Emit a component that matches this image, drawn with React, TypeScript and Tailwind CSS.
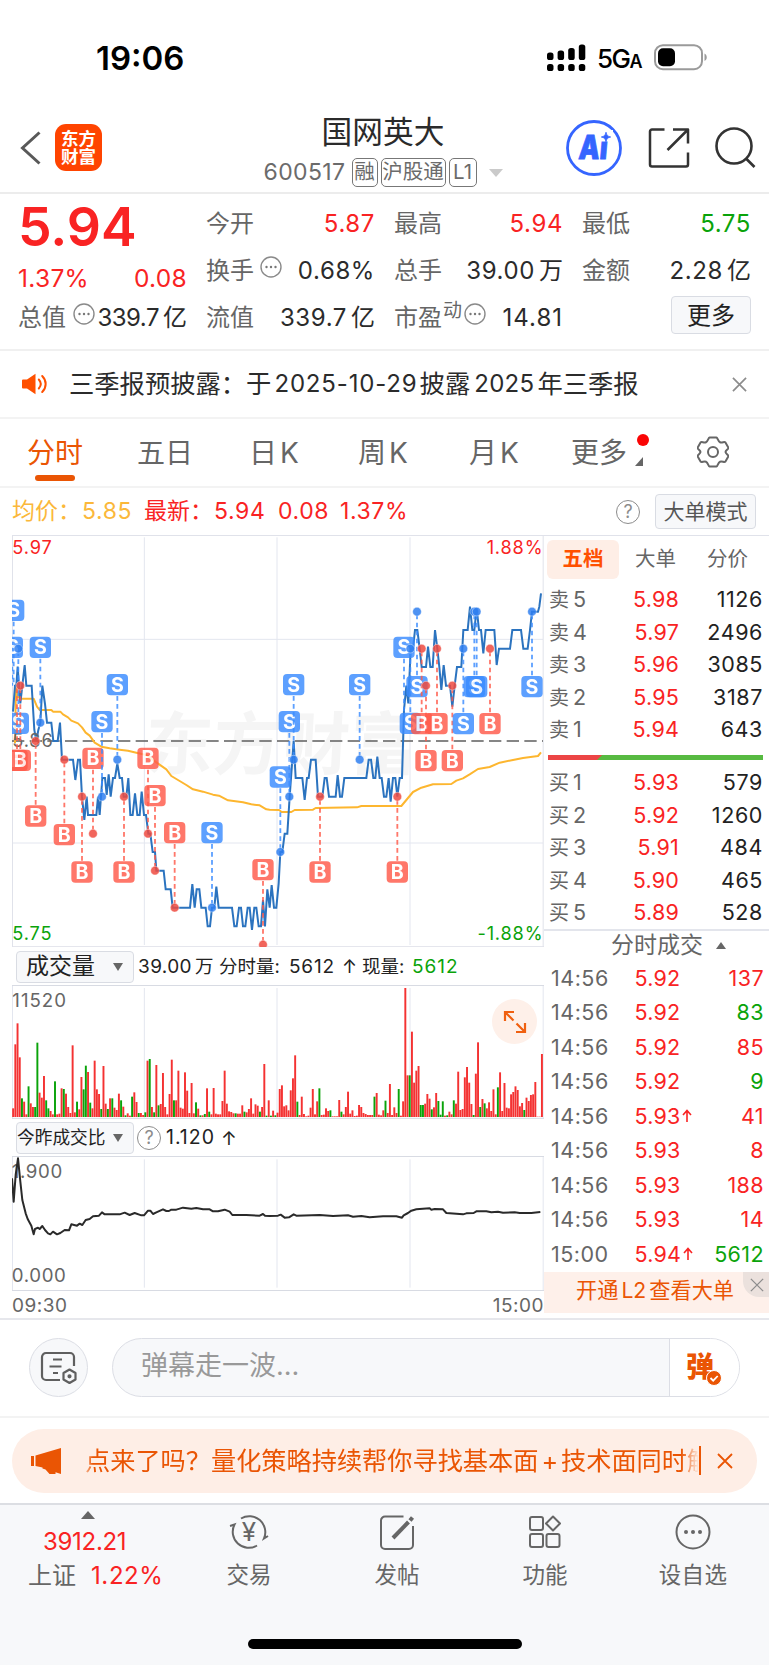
import React from "react";

type Pt = [number, number];

/* Chart data is stored at three units per CSS pixel. */
const shift = (pts: Pt[]): Pt[] => pts.map(([x, y]) => [x + 810, y]);
const toPoints = (pts: Pt[]) => pts.map((p) => p.join(",")).join(" ");

const price: Pt[] = [
  [40, 545], [46, 467], [50, 467], [54, 410], [58, 467], [62, 520], [68, 467], [75, 405], [80, 467], [96, 467], [104, 600], [110, 633], [116, 600], [122, 578],
  [128, 467], [136, 522], [142, 578], [155, 578], [161, 633], [174, 633], [181, 578], [187, 689], [220, 689], [227, 750], [235, 689], [241, 689], [247, 800],
  [254, 870], [261, 800], [265, 855], [290, 855], [295, 800], [300, 855], [308, 744], [316, 744], [321, 795], [327, 733], [333, 800], [340, 744], [346, 744],
  [353, 700], [360, 744], [367, 744], [372, 800], [380, 800], [386, 744], [392, 855], [399, 855], [406, 790], [413, 855], [420, 855], [426, 785], [433, 855],
  [439, 855], [446, 911], [452, 911], [459, 966], [466, 966], [470, 1022], [492, 1022], [498, 1078], [513, 1078], [519, 1133], [571, 1133], [578, 1062],
  [585, 1133], [591, 1078], [599, 1078], [605, 1133], [618, 1133], [624, 1189], [631, 1189], [637, 1133], [644, 1133], [650, 1070], [657, 1133], [697, 1133],
  [704, 1189], [711, 1189], [718, 1133], [724, 1133], [730, 1189], [737, 1189], [744, 1133], [750, 1133], [757, 1200], [764, 1133], [770, 1133], [777, 1189],
  [784, 1189], [790, 1110], [796, 1189], [803, 1078], [810, 1133], [816, 1065], [823, 1133], [830, 1133],
  ...shift([
    [27, 1060], [32, 966], [38, 966], [45, 911], [53, 911], [60, 800], [72, 633], [78, 744], [98, 744], [105, 810], [112, 744], [117, 744], [124, 689], [138, 689],
    [145, 800], [158, 800], [165, 744], [171, 744], [178, 800], [198, 800], [204, 735], [211, 800], [217, 800], [224, 744], [290, 744], [297, 689], [304, 689],
    [311, 744], [317, 744], [323, 680], [330, 744], [336, 744], [343, 800], [350, 800], [357, 744], [363, 815], [370, 744], [377, 744], [383, 800], [390, 744],
    [397, 744], [403, 540], [410, 467], [416, 520], [423, 356], [430, 356], [436, 300], [443, 300], [450, 356], [456, 411], [469, 411], [475, 350], [482, 411],
    [489, 411], [496, 300], [503, 356], [509, 411], [515, 480], [522, 405], [529, 467], [541, 467], [548, 530], [555, 467], [562, 411], [575, 411], [581, 300],
    [594, 300], [601, 230], [608, 300], [614, 300], [621, 235], [628, 300], [634, 300], [641, 370], [648, 300], [674, 300], [681, 405], [688, 356], [721, 356],
    [728, 300], [754, 300], [761, 356], [774, 356], [781, 300], [787, 245], [805, 245], [809, 230], [814, 190],
  ]),
];

const average: Pt[] = [
  [46, 640], [49, 465], [54, 500], [62, 506], [102, 506], [112, 530], [120, 540], [155, 540], [160, 545], [182, 545], [190, 553], [205, 562], [215, 572],
  [235, 580], [247, 592], [258, 608], [270, 617], [285, 638], [305, 650], [330, 655], [360, 659], [385, 662], [410, 668], [440, 675], [470, 697], [500, 718],
  [515, 738], [535, 750], [560, 765], [580, 778], [610, 785], [640, 794], [658, 797], [685, 811], [730, 817], [755, 823], [780, 826], [800, 838],
  ...shift([
    [0, 839], [28, 840], [36, 846], [65, 846], [75, 840], [130, 839], [138, 834], [262, 832], [275, 828], [395, 828], [410, 810], [430, 786], [455, 773],
    [490, 763], [545, 762], [560, 752], [580, 745], [600, 733], [625, 717], [660, 711], [690, 698], [730, 690], [760, 684], [805, 678], [814, 667],
  ]),
];

const ratio: Pt[] = [
  [37, 700], [42, 770], [48, 690], [55, 640], [62, 710], [68, 765], [78, 805], [84, 822], [95, 842], [102, 868], [106, 852], [115, 848], [120, 852], [128, 843],
  [136, 855], [145, 865], [152, 868], [160, 860], [172, 868], [182, 864], [195, 855], [208, 856], [215, 838], [232, 842], [240, 836], [248, 840], [258, 825],
  [270, 822], [280, 814], [298, 812], [307, 802], [315, 808], [360, 808], [375, 803], [390, 810], [405, 804], [425, 811], [433, 811], [445, 797], [452, 797],
  [460, 807], [470, 802], [490, 793], [500, 798], [508, 798], [515, 794], [530, 794], [550, 788], [575, 791], [590, 789], [610, 793], [630, 793], [640, 799],
  [655, 799], [675, 794], [690, 800], [698, 810], [740, 810], [780, 812], [790, 807], [796, 812],
  ...shift([
    [0, 813], [25, 812], [33, 809], [45, 818], [58, 817], [72, 808], [80, 812], [150, 810], [190, 813], [235, 811], [250, 815], [275, 813], [300, 817],
    [340, 814], [380, 814], [397, 818], [402, 811], [415, 804], [425, 797], [440, 793], [480, 790], [485, 794], [495, 792], [520, 793], [530, 804],
    [560, 806], [580, 808], [590, 805], [612, 804], [620, 799], [650, 799], [665, 802], [685, 800], [700, 803], [735, 802], [750, 804], [785, 804], [812, 801],
  ]),
];

type Marker = [kind: "S" | "B", x: number, boxY: number, dotY: number];
const markers: Marker[] = [
  ["S", 42, 241, 467], ["S", 38, 352, 467], ["S", 122, 352, 578], ["S", 56, 580, 356], ["B", 52, 691, 467], ["B", 62, 691, 467],
  ["B", 108, 858, 633], ["B", 194, 914, 689], ["B", 247, 1026, 800], ["B", 280, 685, 911], ["S", 307, 575, 800], ["S", 353, 464, 689],
  ["B", 373, 1026, 800], ["B", 445, 685, 911], ["B", 466, 797, 1022], ["B", 525, 908, 1133], ["S", 637, 908, 1133], ["B", 790, 1019, 1244],
  ["S", 842, 741, 966], ["S", 869, 575, 800], ["S", 882, 464, 689], ["S", 1080, 464, 689], ["B", 961, 1026, 800], ["B", 1193, 1026, 800],
  ["S", 1213, 352, 578], ["S", 1232, 580, 356], ["S", 1252, 470, 245], ["B", 1266, 581, 356], ["B", 1279, 692, 467], ["B", 1312, 581, 356],
  ["B", 1358, 692, 467], ["S", 1391, 581, 356], ["S", 1424, 470, 245], ["S", 1431, 470, 245], ["B", 1471, 581, 356], ["S", 1597, 470, 245],
];
const hiddenDots = new Set(["42-467", "38-467", "52-467", "1213-578"]);

/* Top edge of each minute's volume bar; green ones carry a "g". */
const volume =
  "490 298 235 337 460g 470 508 424g 475 486 486g 293g 443 458 393 466g 490g 498 508 409g 508 506 430 432g 446 486 504 301 502 470g 493 396 433g 362g 381 473g 490 347 433 447 492g 363 476 492g 460 460g 488 495 446 466g 485 511g 505 512 455g 442 471 504g 504 510 502g 347 342g 486 502g 360 481g 477 384 486 508 447 344 466g 466 377 488 491 382 437 504 414 505 472g 491 511g 511 507g 430 500g 508 429 506 508 508 468 377 476 499 501 505 505g 506 506 481 500g 502 492 460 506 478 482 500g 486 357 512g 466 512g 497 511g 503 432 421 484 481 496 436 400 331 470g 510 455 507 514 512 488 432 508 469 430g 510 509 490 498 496g 514 514 514 465 500g 508 486 440 506 496 513 512 480 486 504 507 510 510 510 455g 444 509 511 496 467g 504 417 510 487 504 432g 512 469 129 391 391g 260 413 377 363 480g 480g 476 447 461 493g 487 444 468g 509g 469g 512 511g 500 508 466g 476 380 495 492 397 366 413 477 510g 386 292 486g 462 475g 490 472 498 433 508 427g 382 498 414 488 490 448 441 424 435 484 474 495g 458 468 450 448 411 515 515 327"
    .split(" ")
    .map((s) => ({ top: parseInt(s, 10), green: s.endsWith("g") }));

const font = "[font-family:Inter,'Noto_Sans_CJK_SC',sans-serif]";

function Dots({ className = "" }: { className?: string }) {
  return (
    <svg viewBox="0 0 22 22" className={`size-[22px] shrink-0 ${className}`} fill="none" stroke="#8a8a8a" strokeWidth="1.4">
      <circle cx="11" cy="11" r="10" />
      {[6.5, 11, 15.5].map((x) => (
        <circle key={x} cx={x} cy="11" r="1.2" fill="#777" stroke="none" />
      ))}
    </svg>
  );
}

function Question({ className = "" }: { className?: string }) {
  return (
    <span className={`flex size-6 shrink-0 items-center justify-center rounded-full border-[1.5px] border-[#8c8c8c] text-[18px] leading-none text-[#8c8c8c] ${className}`}>?</span>
  );
}

function Close({ className = "", color = "#8c8c8c", width = 1.8 }: { className?: string; color?: string; width?: number }) {
  return (
    <svg viewBox="0 0 16 16" className={className} stroke={color} strokeWidth={width}>
      <path d="M1 1l14 14M15 1L1 15" />
    </svg>
  );
}

function StatusBar() {
  return (
    <div className="flex h-[110px] items-center pl-[96px] text-black">
      <div className="w-[451px] pt-[7px] text-[33px] font-semibold tracking-[0px]">19:06</div>
      <svg viewBox="0 0 40 28" className="mt-[5px] h-7 w-10">
        {[0, 10.6, 21.2, 31.8].map((x, i) => (
          <g key={x}>
            <rect x={x} y={[8.5, 6.5, 4, 0.5][i]} width="6.5" height={[7.5, 9.5, 12, 15.5][i]} rx="2.6" />
            <rect x={x} y="20" width="6.5" height="7" rx="2.6" />
          </g>
        ))}
      </svg>
      <div className="ml-[10px] w-[57px] whitespace-nowrap pt-[7px] text-[26px] font-medium leading-none tracking-[-1.5px]">
        5G<span className="text-[18px] font-semibold">A</span>
      </div>
      <svg viewBox="0 0 54 27" className="mt-[4px] h-[27px] w-[54px]">
        <rect x="1" y="1.200" width="47" height="24" rx="8" fill="none" stroke="#9a9a9a" strokeWidth="2" />
        <rect x="4" y="4.200" width="17" height="18" rx="5" />
        <path d="M50.500 9.500c3 1.400 3 6.200 0 7.500z" fill="#9a9a9a" />
      </svg>
    </div>
  );
}

function Header() {
  const tag = "flex h-[29px] items-center justify-center rounded-[5px] border-[1.5px] border-[#777] text-[20.5px] leading-none";
  return (
    <div className="flex h-[84px] items-start border-b-2 border-[#ececec] pl-5">
      <svg viewBox="0 0 21 34" className="mt-[21px] h-[34px] w-[21px]" fill="none" stroke="#595959" strokeWidth="3">
        <path d="M19.500 1.500L2.500 17l17 15.500" />
      </svg>
      <div className="ml-[14px] mt-[14px] flex h-[47px] w-[47px] flex-col items-center justify-center rounded-[11px] bg-[#ff4400] text-[17.500px] font-bold leading-[18px] text-white">
        <span>东方</span>
        <span>财富</span>
      </div>
      <div className="flex w-[463px] flex-col items-center pl-[99px]">
        <div className="mt-[4px] text-[30.700px] leading-[36px] text-[#2b2b2b]">国网英大</div>
        <div className="mt-[8px] flex items-center text-[#6b6b6b]">
          <span className="mr-[6px] text-[23px] leading-none tracking-[0.4px]">600517</span>
          <span className={`${tag} w-[26px]`}>融</span>
          <span className={`${tag} ml-[3px] w-[65px]`}>沪股通</span>
          <span className={`${tag} ml-[3px] w-[28px]`}>L1</span>
          <svg viewBox="0 0 14 8" className="ml-[12px] h-2 w-3.5" fill="#cacaca"><path d="M0 0h14L7 8z" /></svg>
        </div>
      </div>
      <div className="flex items-center pt-[9px]">
        <svg viewBox="0 0 58 58" className="h-[58px] w-[58px]" fill="#3565ff">
          <circle cx="29" cy="29" r="26.500" fill="#fff" stroke="#3565ff" strokeWidth="2.800" />
          <text transform="translate(13 39.500) skewX(-5) scale(.8 1)" fontSize="33" fontWeight="900" stroke="#3565ff" strokeWidth="0.800" fontFamily="Inter, sans-serif">Ai</text>
          <rect x="34" y="11" width="14" height="11.500" fill="#fff" />
          <path d="M41 13.200c.7 3 1.500 4 4.700 4.800-3.200.8-4 1.800-4.700 4.800-.7-3-1.500-4-4.700-4.800 3.200-.8 4-1.800 4.700-4.800z" stroke="#3565ff" strokeWidth="0.800" />
        </svg>
        <svg viewBox="0 0 42 42" className="ml-[25px] h-[42px] w-[42px]" fill="none" stroke="#333" strokeWidth="2.500" strokeLinejoin="round">
          <path d="M16.500 2.500H4a2 2 0 0 0-2 2v33a2 2 0 0 0 2 2h34a2 2 0 0 0 2-2V25.500M25 2.500h15V16.500M40 2.500L19.500 23" />
        </svg>
        <svg viewBox="0 0 44 44" className="ml-[24px] h-[44px] w-[44px]" fill="none" stroke="#333" strokeWidth="2.600">
          <circle cx="20" cy="20" r="17.500" />
          <path d="M32 32.500l8.500 8.500" />
        </svg>
      </div>
    </div>
  );
}

function Stat({ label, children, tone = "text-[#2b2b2b]", extra }: { label: string; children?: React.ReactNode; tone?: string; extra?: React.ReactNode }) {
  return (
    <div className="flex h-[47px] items-center whitespace-nowrap leading-none">
      <span className="text-[24px] text-[#666]">{label}</span>
      {extra}
      <span className={`ml-auto text-[24px] tracking-[0.6px] ${tone}`}>{children}</span>
    </div>
  );
}

const Unit = ({ children }: { children: string }) => <span className="ml-[4px] text-[24px] tracking-normal">{children}</span>;

function Quote() {
  return (
    <section className="flex h-[157px] gap-[19px] border-b-2 border-[#f0f0f0] pl-[18px] pt-[6px]">
      <div className="flex w-[169px] flex-col">
        <div className="flex h-[54px] items-center text-[53.500px] font-semibold leading-none text-[#f92323]">5.94</div>
        <div className="flex h-[46px] items-center justify-between pt-[3px] text-[24.500px] tracking-[0.3px] text-[#f92323]">
          <span>1.37%</span><span>0.08</span>
        </div>
        <div className="-mt-[6px]">
          <Stat label="总值" extra={<Dots className="-mt-2 ml-[7px]" />}>
            <span className="tracking-[-0.5px]">339.7</span><Unit>亿</Unit>
          </Stat>
        </div>
      </div>
      <div className="w-[169px]">
        <Stat label="今开" tone="text-[#f92323]">5.87</Stat>
        <Stat label="换手" extra={<Dots className="-mt-2 ml-[6px]" />}>0.68%</Stat>
        <Stat label="流值">339.7<Unit>亿</Unit></Stat>
      </div>
      <div className="w-[169px]">
        <Stat label="最高" tone="text-[#f92323]">5.94</Stat>
        <Stat label="总手">39.00<Unit>万</Unit></Stat>
        <Stat label="市盈" extra={<><span className="-mt-[14px] ml-[1px] text-[19px] text-[#666]">动</span><Dots className="-mt-2 ml-[2px]" /></>}><span className="tracking-[1px]">14.81</span></Stat>
      </div>
      <div className="flex w-[169px] flex-col">
        <Stat label="最低" tone="text-[#0aa30a]">5.75</Stat>
        <Stat label="金额">2.28<Unit>亿</Unit></Stat>
        <button className="ml-auto mt-[2px] flex h-[38px] w-[80px] items-center justify-center rounded-[4px] border border-[#d9dce3] bg-[#f7f8fa] pt-px text-[24px] leading-none text-[#222]">更多</button>
      </div>
    </section>
  );
}

function Notice() {
  return (
    <section className="flex h-[68px] items-center border-b-2 border-[#f3f3f3] pl-[22px]">
      <svg viewBox="0 0 26 22" className="h-[22px] w-[26px]" fill="#ff5000">
        <path d="M1 6.500h4L13.500.8v20.400L5 15.500H1a1 1 0 0 1-1-1v-7a1 1 0 0 1 1-1z" />
        <path d="M16.800 6.500c2.400 2.700 2.400 6.300 0 9M20.200 3c4.600 4.500 4.600 11.500 0 16" fill="none" stroke="#ff5000" strokeWidth="2" strokeLinecap="round" />
      </svg>
      <div className="ml-[21px] flex w-[663px] items-center whitespace-nowrap text-[25.300px] leading-none text-[#2b2b2b]">
        三季报预披露：于<span className="ml-[3px] mr-[2px] text-[24px] tracking-[0.85px]">2025-10-29</span>披露<span className="ml-[4px] mr-[3px] text-[24px] tracking-[0.3px]">2025</span>年三季报
      </div>
      <Close className="size-[15px]" />
    </section>
  );
}

function Tabs() {
  const K = () => <span className="ml-[3px]">K</span>;
  const tab = "flex items-center whitespace-nowrap";
  return (
    <nav className="flex h-[69px] items-stretch border-b-2 border-[#f3f3f3] pl-[27px] text-[28px] leading-none text-[#666]">
      <div className={`${tab} relative w-[110px] text-[#ea5504]`}>
        分时
        <span className="absolute bottom-[5px] left-[8px] h-[6px] w-[40px] rounded-full bg-[#ea5504]" />
      </div>
      <div className={`${tab} w-[112px]`}>五日</div>
      <div className={`${tab} w-[109px]`}>日<K /></div>
      <div className={`${tab} w-[111px]`}>周<K /></div>
      <div className={`${tab} w-[102px]`}>月<K /></div>
      <div className={`${tab} relative w-[126px]`}>
        更多
        <span className="absolute left-[66px] top-[15px] size-[12px] rounded-full bg-[#fa0505]" />
        <svg viewBox="0 0 8 9" className="absolute left-[64px] top-[38px] h-[9px] w-2" fill="#666"><path d="M8 0v9H0z" /></svg>
      </div>
      <svg viewBox="0 0 32 32" className="mt-[17px] size-8" fill="none" stroke="#666" strokeWidth="2" strokeLinejoin="round">
        <path d="M12.500 1.500h7c1 0 1.500 4 3.500 4.800s4.500-1 5.300 0l3 5.200c.6 1.500-2.800 2.800-2.800 4.500s3.400 3 2.800 4.500l-3 5.200c-.8 1-3.300-.8-5.300 0s-2.500 4.800-3.500 4.800h-7c-1 0-1.500-4-3.500-4.800s-4.500 1-5.300 0l-3-5.200C.1 19 3.500 17.700 3.500 16S.1 13 .7 11.500l3-5.200c.8-1 3.300.8 5.300 0s2.500-4.800 3.500-4.800z" />
        <circle cx="16" cy="16" r="5" />
      </svg>
    </nav>
  );
}

function InfoLine() {
  return (
    <div className="flex h-[47px] items-center whitespace-nowrap pl-[12px] text-[23px] leading-none text-[#f92323]">
      <span className="w-[70px] text-[#fbb83a]">均价：</span>
      <span className="w-[62px] tracking-[0.6px] text-[#fbb83a]">5.85</span>
      <span className="w-[70px]">最新：</span>
      <span className="w-[64px] tracking-[0.6px]">5.94</span>
      <span className="w-[62px] tracking-[0.6px]">0.08</span>
      <span className="w-[276px] tracking-[0.6px]">1.37%</span>
      <Question />
      <button className="ml-[15px] flex h-[35px] w-[101px] items-center justify-center rounded-[4px] border border-[#d9dce3] bg-[#f7f8fa] text-[21px] leading-none text-[#555]">大单模式</button>
    </div>
  );
}

function PriceChart() {
  return (
    <svg viewBox="37 15 1596 1236" className="block h-[412px] w-[532px] overflow-hidden" fontFamily="Inter, 'Noto Sans CJK SC', sans-serif">
      <text x="440" y="718" fontSize="205" fontWeight="700" fill="#f5f5f5" transform="skewX(-3) translate(30 0)">东方财富</text>
      <g stroke="#e3e6ef" strokeWidth="3" fill="none">
        <path d="M434 22V1245M832 22V1245M1231 22V1245M37 328H1630M37 939H1630" />
        <path d="M38.500 16V1252M1630.500 16V1252M37 16.500H1633M37 1250H1633" stroke="#e0e2ea" />
      </g>
      <path d="M37 633H1630" stroke="#5f5f5f" strokeWidth="4" strokeDasharray="37 16" fill="none" />
      <polyline points={toPoints(average)} fill="none" stroke="#fdb62f" strokeWidth="6" strokeLinejoin="round" />
      <polyline points={toPoints(price)} fill="none" stroke="#2b73bf" strokeWidth="6" strokeLinejoin="miter" />
      <g fontSize="54.500" letterSpacing="2.500">
        <text x="38" y="72" fill="#f92323">5.97</text>
        <text x="38" y="1229" fill="#0aa30a">5.75</text>
        <text x="38" y="652" fill="#666">5.86</text>
        <text x="1631" y="73" fill="#f92323" textAnchor="end">1.88%</text>
        <text x="1631" y="1229" fill="#0aa30a" textAnchor="end">-1.88%</text>
      </g>
      {markers.map(([kind, x, boxY, dotY], i) => {
        const color = kind === "S" ? "#3a8cff" : "#ff5a4a";
        const edge = boxY < dotY ? boxY + 34 : boxY - 34;
        return (
          <g key={i} opacity="0.82">
            <path d={`M${x} ${edge}V${dotY}`} stroke={color} strokeWidth="5.500" strokeDasharray="14 10" />
            <rect x={x - 32} y={boxY - 32} width="64" height="64" rx="12" fill={color} />
            <text x={x} y={boxY + 21} fontSize="59" fontWeight="700" fill="#fff" textAnchor="middle">{kind}</text>
          </g>
        );
      })}
      {markers.map(([kind, x, , dotY], i) =>
        hiddenDots.has(`${x}-${dotY}`) ? null : (
          <circle key={i} cx={x} cy={dotY} r="13" fill={kind === "S" ? "#2f7ff0" : "#ef4a40"} fillOpacity="0.85" stroke="#fff" strokeWidth="2" strokeOpacity="0.6" />
        ),
      )}
    </svg>
  );
}

function Picker({ children, className }: { children: string; className: string }) {
  return (
    <div className={`flex h-[32px] w-[118px] shrink-0 items-center rounded-[4px] border border-[#d9dce3] bg-[#f7f8fa] leading-none text-[#222] ${className}`}>
      {children}
      <svg viewBox="0 0 10 8" className="ml-auto mr-[10px] h-2 w-2.5" fill="#666"><path d="M0 0h10L5 8z" /></svg>
    </div>
  );
}

function VolumePane() {
  return (
    <>
      <div className="flex h-[38px] items-center whitespace-nowrap pl-[4px] pt-px text-[18.500px] leading-none text-[#222]">
        <Picker className="pl-[9px] text-[23px]">成交量</Picker>
        <span className="ml-[4px] w-[81px] text-[19px] tracking-[0.4px]">39.00<span className="ml-[3px] text-[18.500px]">万</span></span>
        <span className="w-[70px]">分时量:</span>
        <span className="w-[53px] text-[19px] tracking-[0.8px]">5612</span>
        <span className="w-[20px] text-[18px]">↑</span>
        <span className="w-[50px]">现量:</span>
        <span className="text-[19px] tracking-[1px] text-[#0aa30a]">5612</span>
      </div>
      <div className="relative h-[134px]">
        <svg viewBox="37 120 1596 402" className="block h-[134px] w-[532px]" fontFamily="Inter, sans-serif">
          <g stroke="#e3e6ef" strokeWidth="3">
            <path d="M434 129V518M832 129V518M1231 129V518M38.500 120V520M1630.500 120V520" />
            <path d="M37 121.500H1633M37 520H1633" stroke="#d8dbe3" />
          </g>
          <text x="38" y="187" fontSize="56" letterSpacing="3" fill="#666">11520</text>
          {volume.map(({ top, green }, i) => (
            <rect key={i} x={37.5 + i * 6.61} y={top} width="5.800" height={516 - top} fill={green ? "#0aa30a" : "#f43232"} />
          ))}
        </svg>
        <button className="absolute left-[480px] top-[14px] flex size-[45px] items-center justify-center rounded-full bg-[#fef0e9]">
          <svg viewBox="0 0 24 24" className="size-6" fill="none" stroke="#f06010" strokeWidth="2.200">
            <path d="M11 2H2v9M2 2l8.500 8.500M22 13v9h-9M22 22l-8.500-8.500" />
          </svg>
        </button>
      </div>
    </>
  );
}

function RatioPane() {
  return (
    <>
      <div className="flex h-[37px] items-center whitespace-nowrap pl-[4px] pt-px text-[19.500px] leading-none text-[#222]">
        <Picker className="text-[17.700px]">今昨成交比</Picker>
        <Question className="ml-[3px]" />
        <span className="ml-[5px] w-[55px] tracking-[1px]">1.120</span>
        <span className="text-[19px]">↑</span>
      </div>
      <svg viewBox="37 633 1596 405" className="block h-[135px] w-[532px]" fontFamily="Inter, sans-serif">
        <g stroke="#e3e6ef" strokeWidth="3">
          <path d="M434 643V1028M832 643V1028M1231 643V1028M38.500 633V1035M1630.500 633V1038" />
          <path d="M37 634.500H1633M37 1036.500H1633" stroke="#d8dbe3" />
        </g>
        <g fontSize="56" fill="#666" letterSpacing="2">
          <text x="36" y="700">1.900</text>
          <text x="36" y="1010">0.000</text>
        </g>
        <polyline points={toPoints(ratio)} fill="none" stroke="#2a2a2a" strokeWidth="6" strokeLinejoin="round" />
      </svg>
      <div className="flex h-[29px] items-center justify-between text-[19px] leading-none tracking-[0.5px] text-[#666]">
        <span>09:30</span><span>15:00</span>
      </div>
    </>
  );
}

const asks = [["卖", "5", "5.98", "1126"], ["卖", "4", "5.97", "2496"], ["卖", "3", "5.96", "3085"], ["卖", "2", "5.95", "3187"], ["卖", "1", "5.94", "643"]];
const bids = [["买", "1", "5.93", "579"], ["买", "2", "5.92", "1260"], ["买", "3", "5.91", "484"], ["买", "4", "5.90", "465"], ["买", "5", "5.89", "528"]];
const trades: [string, string, boolean, string, boolean][] = [
  ["14:56", "5.92", false, "137", false], ["14:56", "5.92", false, "83", true], ["14:56", "5.92", false, "85", false],
  ["14:56", "5.92", false, "9", true], ["14:56", "5.93", true, "41", false], ["14:56", "5.93", false, "8", false],
  ["14:56", "5.93", false, "188", false], ["14:56", "5.93", false, "14", false], ["15:00", "5.94", true, "5612", true],
];

function Levels({ rows }: { rows: string[][] }) {
  return (
    <>
      {rows.map(([side, n, p, v]) => (
        <div key={side + n} className="flex h-[32.500px] items-center pl-[5px] pr-[6px] pt-px text-[21.500px] leading-none">
          <span className="w-[80px] text-[#666]"><span className="mr-[4px] text-[20px]">{side}</span>{n}</span>
          <span className="w-[50px] text-right tracking-[0.2px] text-[#f92323]">{p}</span>
          <span className="ml-auto tracking-[0.6px] text-[#222]">{v}</span>
        </div>
      ))}
    </>
  );
}

function OrderBook() {
  return (
    <aside className="flex w-[225px] shrink-0 flex-col">
      <div className="flex h-[48px] items-center border-t border-[#e0e2ea] pl-[3px] text-[20.500px] leading-none text-[#666]">
        <span className="flex h-[39px] w-[72px] items-center justify-center rounded-[6px] bg-[#feeee6] font-bold text-[#ff5000]">五档</span>
        <span className="ml-[16px]">大单</span>
        <span className="ml-[31px]">分价</span>
      </div>
      <Levels rows={asks} />
      <div className="flex h-[20.500px] items-center pl-[4px] pt-[3px]">
        <svg viewBox="0 0 215 5" className="h-[5px] w-[215px]">
          <rect width="215" height="5" fill="#57ba41" />
          <path d="M0 0h54l-5 5H0z" fill="#ec4545" />
        </svg>
      </div>
      <Levels rows={bids} />
      <div className="flex h-[32.500px] items-center border-t-2 border-[#e3e5ec] pl-[67px] text-[23px] leading-none text-[#666]">
        分时成交
        <svg viewBox="0 0 10 7" className="ml-[13px] h-[7px] w-[10px]" fill="#666"><path d="M5 0l5 7H0z" /></svg>
      </div>
      {trades.map(([t, p, up, v, green], i) => (
        <div key={i} className="flex h-[34.500px] shrink-0 items-center pl-[7px] pr-[5px] text-[21.500px] leading-none">
          <span className="w-[83.500px] tracking-[0.5px] text-[#666]">{t}</span>
          <span className="flex tracking-[0.2px] text-[#f92323]">
            {p}
            {up && (
              <svg viewBox="0 0 10 14" className="ml-[2px] mt-[3px] h-[14px] w-[10px]" fill="none" stroke="#f92323" strokeWidth="1.600"><path d="M5 13V2M1 6l4-4.500L9 6" /></svg>
            )}
          </span>
          <span className={`ml-auto tracking-[0.4px] ${green ? "text-[#0aa30a]" : "text-[#f92323]"}`}>{v}</span>
        </div>
      ))}
      <div className="relative mt-auto mb-[5px] flex h-[41px] shrink-0 items-center bg-[#fef0ea] pb-[4px] pl-[32px] text-[21.200px] leading-none text-[#ea5504]">
        开通<span className="mx-[3px]">L2</span>查看大单
        <span className="absolute right-0 top-0 flex h-[25px] w-[26px] items-center justify-center rounded-bl-[16px] bg-[#ebe1dd] pl-[2px]">
          <Close className="size-[14px]" width={1.5} />
        </span>
      </div>
    </aside>
  );
}

function Danmaku() {
  return (
    <section className="flex h-[98px] items-center border-b-2 border-[#f3f3f3] pb-px pl-[29px]">
      <div className="flex size-[59px] items-center justify-center rounded-full border-[1.500px] border-[#dcdee5] bg-[#f7f8fa]">
        <svg viewBox="0 0 38 34" className="h-[34px] w-[38px]" fill="none" stroke="#5f5f5f" strokeWidth="2.200" strokeLinejoin="round">
          <path d="M34 15V6a4 4 0 0 0-4-4H6a4 4 0 0 0-4 4v19a4 4 0 0 0 4 4h14" />
          <path d="M13 8.500h9M9.500 15.500h12M13 22h5" />
          <path d="M29.500 18.500l6 3.500v6.500l-6 3.500-6-3.500V22z" />
          <circle cx="29.500" cy="25.300" r="1" fill="#5f5f5f" />
        </svg>
      </div>
      <div className="ml-[24px] flex h-[59px] w-[628px] overflow-hidden rounded-full border-[1.500px] border-[#dcdee5] bg-[#f7f8fa]">
        <div className="flex flex-1 items-center pb-[4px] pl-[28px] text-[27px] leading-none text-[#999]">弹幕走一波...</div>
        <div className="relative flex w-[70px] items-center border-l-[1.500px] border-[#dcdee5] bg-white pb-[2px] pl-[16px] text-[28px] font-black leading-none text-[#ea5504]">
          弹
          <svg viewBox="0 0 16 16" className="absolute left-[36px] top-[31px] size-4">
            <circle cx="8" cy="8" r="7.500" fill="#ea5504" stroke="#fff" />
            <path d="M4.500 8l2.700 2.700L11.700 6" fill="none" stroke="#fff" strokeWidth="1.800" />
          </svg>
        </div>
      </div>
    </section>
  );
}

function Promo() {
  return (
    <section className="flex h-[85px] items-center pl-[12px]">
      <div className="flex h-[64px] w-[745px] items-center rounded-full bg-[#feeee6] pl-[19px] text-[#ea5504]">
        <svg viewBox="0 0 30 26" className="h-[26px] w-[30px]" fill="#ea5504">
          <path d="M0 8h3v10H0zM4.500 7.500L30 0v26l-5.500-1.800V26h-6l-4-4.500-3-1v-1L4.500 18z" />
        </svg>
        <div className="ml-[20px] w-[618px] overflow-hidden whitespace-nowrap pl-[4px] text-[25.200px] leading-[36px] [mask-image:linear-gradient(to_right,transparent,#000_12px,#000_600px,transparent)]">
          点来了吗？量化策略持续帮你寻找基本面<span className="mx-[3px]">+</span>技术面同时解
        </div>
        <span className="h-[29px] w-[1.500px] bg-[#ea5504]" />
        <Close className="ml-[16px] size-[16px]" color="#ea5504" />
      </div>
    </section>
  );
}

function TabBar() {
  const item = "flex w-[148px] flex-col items-center text-[22.500px] leading-none text-[#666]";
  const svg = { fill: "none", stroke: "#666", strokeWidth: 2 } as const;
  return (
    <footer className="relative flex h-[162px] whitespace-nowrap border-t-2 border-[#dcdee3] bg-[#f7f8fa]">
      <div className="flex w-[175px] flex-col pl-[28px] leading-none text-[#f92323]">
        <svg viewBox="0 0 14 8" className="ml-[53px] mt-[6px] h-2 w-3.5" fill="#666"><path d="M7 0l7 8H0z" /></svg>
        <span className="ml-[15px] mt-[11px] text-[24px] tracking-[-0.3px]">3912.21</span>
        <div className="mt-[10px] flex items-center text-[24px] tracking-[0.6px]"><span className="mr-[15px] tracking-normal text-[#666]">上证</span>1.22%</div>
      </div>
      <div className={item}>
        <svg viewBox="0 0 40 36" className="mt-[9px] h-9 w-10" {...svg}>
          <path d="M12 4.500A16 16 0 0 1 35 24.500l4-2.500M28 31.500A16 16 0 0 1 5.500 10.500L1 12" />
          <text x="20" y="27" fontSize="26" textAnchor="middle" fill="#666" stroke="none" fontFamily="Inter, sans-serif">¥</text>
        </svg>
        <span className="mt-[13.500px]">交易</span>
      </div>
      <div className={item}>
        <svg viewBox="0 0 36 36" className="mt-[9px] size-9" {...svg}>
          <path d="M24.500 2.500H6a4 4 0 0 0-4 4V31a4 4 0 0 0 4 4h24a4 4 0 0 0 4-4V12" />
          <path d="M29.500 8L14 24" strokeWidth="4" />
          <path d="M31 6.500l2.500-3" strokeWidth="4" />
        </svg>
        <span className="mt-[13.500px]">发帖</span>
      </div>
      <div className={item}>
        <svg viewBox="0 0 34 36" className="mt-[9px] h-9 w-[34px]" {...svg}>
          <rect x="2" y="3" width="13" height="13" rx="2" />
          <rect x="2" y="20" width="13" height="13" rx="2" />
          <rect x="18.500" y="20" width="13" height="13" rx="2" />
          <path d="M25 2.500l7 7-7 7-7-7z" strokeLinejoin="round" />
        </svg>
        <span className="mt-[13.500px]">功能</span>
      </div>
      <div className={item}>
        <svg viewBox="0 0 36 36" className="mt-[9px] size-9" {...svg}>
          <circle cx="18" cy="18" r="16.500" />
          {[11, 18, 25].map((x) => <circle key={x} cx={x} cy="18" r="2" fill="#666" stroke="none" />)}
        </svg>
        <span className="mt-[13.500px] tracking-[0.3px]">设自选</span>
      </div>
      <div className="absolute bottom-[16px] left-[248px] h-[10px] w-[274px] rounded-full bg-black" />
    </footer>
  );
}

export default function App() {
  return (
    <main className={`flex h-[1665px] w-[769px] flex-col overflow-hidden bg-white ${font}`}>
      <StatusBar />
      <Header />
      <Quote />
      <Notice />
      <Tabs />
      <InfoLine />
      <div className="flex h-[785px] border-b-2 border-[#e6e7ec]">
        <div className="ml-[12px] w-[532px] shrink-0">
          <PriceChart />
          <VolumePane />
          <RatioPane />
        </div>
        <OrderBook />
      </div>
      <Danmaku />
      <Promo />
      <TabBar />
    </main>
  );
}
